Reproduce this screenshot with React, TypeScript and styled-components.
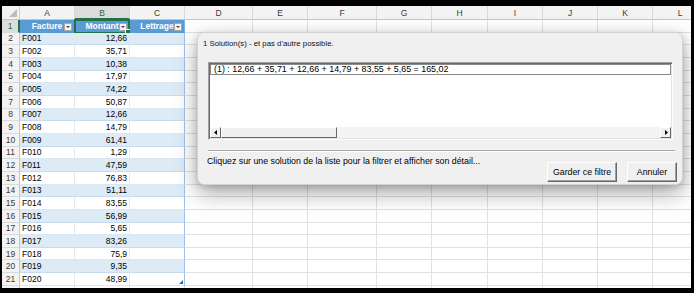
import styled, { createGlobalStyle } from 'styled-components'

const GlobalStyle = createGlobalStyle`
  html, body {
    margin: 0;
    padding: 0;
    background: #000;
  }
  body {
    width: 694px;
    height: 293px;
    overflow: hidden;
  }
`

const COLS = ['A', 'B', 'C', 'D', 'E', 'F', 'G', 'H', 'I', 'J', 'K', 'L']
const WIDTHS = [55, 55, 55, 68, 55, 69, 55, 56, 55, 55, 55, 55]
const HEADERS = ['Facture', 'Montant', 'Lettrage']

const invoices: [string, string][] = [
  ['F001', '12,66'],
  ['F002', '35,71'],
  ['F003', '10,38'],
  ['F004', '17,97'],
  ['F005', '74,22'],
  ['F006', '50,87'],
  ['F007', '12,66'],
  ['F008', '14,79'],
  ['F009', '61,41'],
  ['F010', '1,29'],
  ['F011', '47,59'],
  ['F012', '76,83'],
  ['F013', '51,11'],
  ['F014', '83,55'],
  ['F015', '56,99'],
  ['F016', '5,65'],
  ['F017', '83,26'],
  ['F018', '75,9'],
  ['F019', '9,35'],
  ['F020', '48,99'],
]

const ROW_COUNT = 22

const App = (): JSX.Element => {
  const rows = Array.from({ length: ROW_COUNT }, (_, i) => i + 1)

  return (
    <>
      <GlobalStyle />
      <Frame>
        <Sheet>
          <Grid>
            <Corner>
              <CornerMark />
            </Corner>
            {COLS.map((c) => (
              <ColHeader key={c} $selected={c === 'B'}>
                {c}
              </ColHeader>
            ))}
            {rows.map((r) => (
              <Row key={r} r={r} />
            ))}
          </Grid>

          <Dialog>
            <Title>1 Solution(s) - et pas d'autre possible.</Title>
            <ListBox>
              <Items>
                <Item>(1) : 12,66 + 35,71 + 12,66 + 14,79 + 83,55 + 5,65 = 165,02</Item>
              </Items>
              <HScroll>
                <ArrowButton>
                  <svg width="4" height="5" viewBox="0 0 4 5">
                    <polygon points="3,0 0,2.5 3,5" fill="#000" />
                  </svg>
                </ArrowButton>
                <Track>
                  <Thumb />
                </Track>
                <ArrowButton>
                  <svg width="4" height="5" viewBox="0 0 4 5">
                    <polygon points="1,0 4,2.5 1,5" fill="#000" />
                  </svg>
                </ArrowButton>
              </HScroll>
            </ListBox>
            <Separator />
            <Footer>
              <Hint>Cliquez sur une solution de la liste pour la filtrer et afficher son détail...</Hint>
              <Buttons>
                <Button $width={70}>Garder ce filtre</Button>
                <Button $width={50}>Annuler</Button>
              </Buttons>
            </Footer>
          </Dialog>
        </Sheet>
      </Frame>
    </>
  )
}

const Row = ({ r }: { r: number }): JSX.Element => {
  const data = invoices[r - 2]
  return (
    <>
      <RowHeader $selected={r === 1}>{r <= 21 ? r : ''}</RowHeader>
      {COLS.map((c, i) => {
        if (i < 3 && r === 1) {
          return (
            <HeadCell key={c}>
              {HEADERS[i]}
              <FilterButton />
              {c === 'B' && (
                <Selection>
                  <FillHandle />
                </Selection>
              )}
            </HeadCell>
          )
        }
        if (i < 3 && data) {
          return (
            <TableCell key={c} $band={r % 2 === 0} $right={i === 1} $last={i === 2}>
              {i === 0 ? data[0] : i === 1 ? data[1] : ''}
              {i === 2 && r === 21 && <ResizeMark />}
            </TableCell>
          )
        }
        return <Cell key={c} />
      })}
    </>
  )
}

const Frame = styled.div`
  width: 694px;
  height: 293px;
  box-sizing: border-box;
  padding: 6px 3px 5px 2px;
  background: #000;
`

const Sheet = styled.div`
  position: relative;
  width: 689px;
  height: 282px;
  overflow: hidden;
  background: #fff;
  font-family: 'Liberation Sans', Arial, sans-serif;
`

const Grid = styled.div`
  display: grid;
  grid-template-columns: 18px ${WIDTHS.map((w) => `${w}px`).join(' ')};
  grid-template-rows: 14px repeat(${ROW_COUNT}, 12.67px);
`

const Corner = styled.div`
  position: relative;
  background: #f3f3f3;
  border-right: 1px solid #d0d0d0;
  border-bottom: 1px solid #c6c6c6;
  box-sizing: border-box;
`

const CornerMark = styled.div`
  position: absolute;
  right: 2px;
  bottom: 2px;
  width: 0;
  height: 0;
  border-left: 8px solid transparent;
  border-bottom: 8px solid #bdbdbd;
`

const ColHeader = styled.div<{ $selected?: boolean }>`
  display: flex;
  align-items: center;
  justify-content: center;
  box-sizing: border-box;
  padding-top: 1px;
  font-size: 8.5px;
  color: ${(p) => (p.$selected ? '#1e6b40' : '#3a3a3a')};
  background: ${(p) => (p.$selected ? '#dcdcdc' : '#f3f3f3')};
  border-right: 1px solid #d8d8d8;
  border-bottom: ${(p) => (p.$selected ? '2px solid #217346' : '1px solid #c6c6c6')};
`

const RowHeader = styled.div<{ $selected?: boolean }>`
  display: flex;
  align-items: center;
  justify-content: center;
  box-sizing: border-box;
  font-size: 8.5px;
  color: ${(p) => (p.$selected ? '#1e6b40' : '#3a3a3a')};
  background: ${(p) => (p.$selected ? '#dcdcdc' : '#f3f3f3')};
  border-right: ${(p) => (p.$selected ? '2px solid #217346' : '1px solid #c6c6c6')};
  border-bottom: 1px solid #dadada;
`

const Cell = styled.div`
  box-sizing: border-box;
  border-right: 1px solid #e1e1e1;
  border-bottom: 1px solid #e1e1e1;
`

const HeadCell = styled.div`
  position: relative;
  display: flex;
  align-items: center;
  justify-content: center;
  box-sizing: border-box;
  font-size: 8.5px;
  font-weight: bold;
  color: #fff;
  background: #5b9bd5;
  border-right: 1px solid #7eb0de;
  white-space: nowrap;
`

const FilterButton = styled.div`
  position: absolute;
  right: 2px;
  top: 3px;
  width: 8px;
  height: 8px;
  box-sizing: border-box;
  background: #f4f4f4;
  border: 1px solid #a9a9a9;

  &::after {
    content: '';
    position: absolute;
    left: 1px;
    top: 2px;
    border-left: 2px solid transparent;
    border-right: 2px solid transparent;
    border-top: 2px solid #444;
  }
`

const Selection = styled.div`
  position: absolute;
  left: -1px;
  top: -1px;
  right: -1px;
  bottom: -1px;
  border: 2px solid #217346;
`

const FillHandle = styled.div`
  position: absolute;
  right: -3px;
  bottom: -3px;
  width: 4px;
  height: 4px;
  background: #217346;
  border: 1px solid #fff;
`

const TableCell = styled.div<{ $band: boolean; $right: boolean; $last: boolean }>`
  position: relative;
  display: flex;
  align-items: center;
  justify-content: ${(p) => (p.$right ? 'flex-end' : 'flex-start')};
  box-sizing: border-box;
  padding: 0 2px;
  font-size: 8.5px;
  color: #000;
  background: ${(p) => (p.$band ? '#ddebf7' : '#fff')};
  border-bottom: 1px solid ${(p) => (p.$band ? '#c5dcf0' : '#dbe7f3')};
  border-right: 1px solid ${(p) => (p.$last ? '#9bc2e6' : '#e4e9ef')};
`

const ResizeMark = styled.div`
  position: absolute;
  right: 1px;
  bottom: 1px;
  width: 0;
  height: 0;
  border-left: 4px solid transparent;
  border-bottom: 4px solid #2f5fbf;
`

const Dialog = styled.div`
  position: absolute;
  left: 195px;
  top: 26px;
  width: 486px;
  height: 153px;
  box-sizing: border-box;
  display: flex;
  flex-direction: column;
  background: #f0f0f0;
  border: 1px solid #d2d2d2;
  border-radius: 7px;
  box-shadow: 0 8px 22px rgba(0, 0, 0, 0.35), 0 2px 6px rgba(0, 0, 0, 0.15);
  font-family: 'Liberation Sans', Arial, sans-serif;
  color: #000;
`

const Title = styled.div`
  padding: 6px 0 0 5px;
  font-size: 7.8px;
  line-height: 10px;
  color: #111;
`

const ListBox = styled.div`
  display: flex;
  flex-direction: column;
  margin: 13px 0 0 10px;
  width: 465px;
  height: 78px;
  box-sizing: border-box;
  background: #fff;
  border: 1px solid;
  border-color: #a0a0a0 #fff #fff #a0a0a0;
  box-shadow: inset 1px 1px 0 #696969, inset -1px -1px 0 #e3e3e3;
  padding: 1px;
`

const Items = styled.div`
  flex: 1;
`

const Item = styled.div`
  height: 11px;
  box-sizing: border-box;
  border: 1px solid #8a8a8a;
  padding-left: 3px;
  font-size: 8.9px;
  line-height: 9px;
  white-space: nowrap;
`

const HScroll = styled.div`
  display: flex;
  height: 11px;
  background: #f4f4f4;
`

const ArrowButton = styled.div`
  display: flex;
  align-items: center;
  justify-content: center;
  width: 11px;
  box-sizing: border-box;
  background: #f0f0f0;
  border: 1px solid;
  border-color: #fff #696969 #696969 #fff;
`

const Track = styled.div`
  flex: 1;
  display: flex;
`

const Thumb = styled.div`
  width: 116px;
  box-sizing: border-box;
  background: #f0f0f0;
  border: 1px solid;
  border-color: #fff #696969 #696969 #fff;
`

const Separator = styled.div`
  margin: 10px 7px 0 10px;
  height: 1px;
  background: #a8a8a8;
  border-bottom: 1px solid #fff;
`

const Footer = styled.div`
  display: flex;
  align-items: flex-start;
  justify-content: space-between;
  margin-top: 4px;
  padding: 0 5px 0 9px;
`

const Hint = styled.div`
  font-size: 8.8px;
  line-height: 11px;
  white-space: nowrap;
`

const Buttons = styled.div`
  display: flex;
  gap: 10px;
  margin-top: 6px;
`

const Button = styled.div<{ $width: number }>`
  display: flex;
  align-items: center;
  justify-content: center;
  width: ${(p) => p.$width}px;
  height: 20px;
  box-sizing: border-box;
  font-size: 8.8px;
  background: #f0f0f0;
  border: 1px solid;
  border-color: #fff #696969 #696969 #fff;
  box-shadow: inset -1px -1px 0 #a0a0a0;
`

export default App
